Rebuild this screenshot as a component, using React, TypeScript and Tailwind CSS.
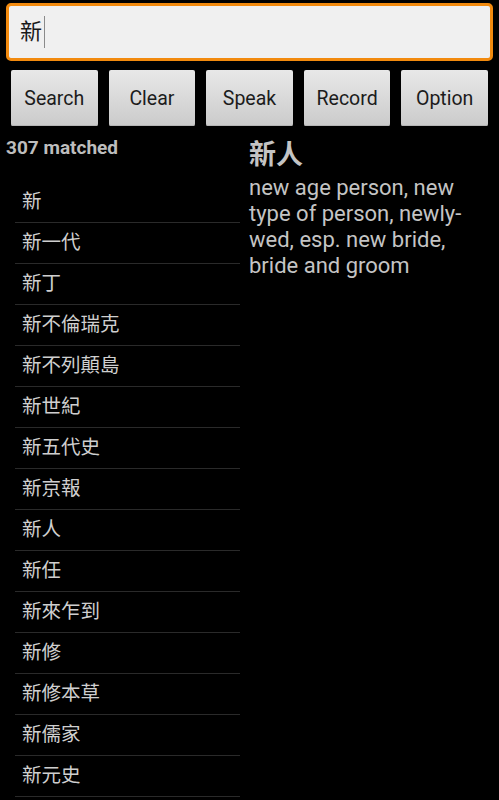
import React from "react";

const items = [
  "新",
  "新一代",
  "新丁",
  "新不倫瑞克",
  "新不列顛島",
  "新世紀",
  "新五代史",
  "新京報",
  "新人",
  "新任",
  "新來乍到",
  "新修",
  "新修本草",
  "新儒家",
  "新元史",
];

const buttons = ["Search", "Clear", "Speak", "Record", "Option"];

const font = {
  fontFamily: 'Roboto, "Noto Sans CJK TC", "Noto Sans CJK SC", sans-serif',
};

export default function App() {
  return (
    <div
      className="w-[499px] h-[800px] bg-black overflow-hidden flex flex-col"
      style={font}
    >
      <div className="pt-[3px] px-[6px] shrink-0">
        <div className="h-[58px] rounded-[5px] border-[3px] border-[#f28a0e] bg-[#f0f0f0] flex items-center pl-[11px]">
          <span className="text-[22px] text-[#1a1a1a] leading-none">新</span>
          <span className="ml-[2px] w-[1px] h-[32px] bg-[#8a8a8a]"></span>
        </div>
      </div>
      <div className="grid grid-cols-5 gap-[11px] px-[11px] mt-[9px] shrink-0">
        {buttons.map((b) => (
          <div
            key={b}
            className="h-[56px] rounded-[2px] bg-gradient-to-b from-[#e8e8e8] to-[#cbcbcb] flex items-center justify-center pt-[1px] text-[19.5px] text-[#1c1c1c] shadow-[inset_0_-1px_0_#b5b5b5]"
          >
            {b}
          </div>
        ))}
      </div>
      <div className="flex mt-[10px] flex-1 min-h-0">
        <div className="w-[240px] shrink-0 flex flex-col">
          <div className="shrink-0 pl-[6px] text-[19px] font-bold text-[#bdbdbd] leading-[24px] h-[46px]">
            307 matched
          </div>
          <div className="ml-[15px] flex flex-col shrink-0">
            {items.map((it) => (
              <div
                key={it}
                className="h-[41px] shrink-0 border-b border-[#2a2a2a] flex items-center pl-[7px] text-[19.5px] text-[#cfcfcf]"
              >
                {it}
              </div>
            ))}
          </div>
        </div>
        <div className="ml-[9px] w-[240px] flex flex-col">
          <div className="text-[27px] font-bold text-[#c4c4c4] leading-[38px]">
            新人
          </div>
          <div className="text-[22px] text-[#c4c4c4] leading-[26px] pt-[1px]">
            new age person, new type of person, newly-wed, esp. new bride,
            bride and groom
          </div>
        </div>
      </div>
    </div>
  );
}
